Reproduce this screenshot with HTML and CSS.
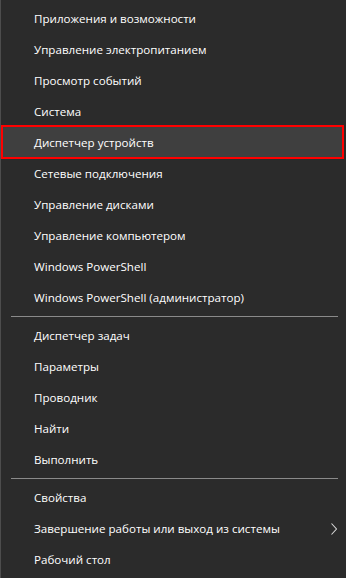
FILE: index.html
```html
<!DOCTYPE html>
<html lang="ru">
<head>
    <meta charset="UTF-8">
    <meta name="viewport" content="width=device-width, initial-scale=1.0">
    <title>Меню Win+X</title>
    <link rel="stylesheet" href="styles.css">
</head>
<body>
    <div class="menu">
        <div class="item">Приложения и возможности</div>
        <div class="item">Управление электропитанием</div>
        <div class="item">Просмотр событий</div>
        <div class="item">Система</div>
        <div class="item selected">Диспетчер устройств</div>
        <div class="item">Сетевые подключения</div>
        <div class="item">Управление дисками</div>
        <div class="item">Управление компьютером</div>
        <div class="item">Windows PowerShell</div>
        <div class="item">Windows PowerShell (администратор)</div>

        <div class="separator"></div>

        <div class="item">Диспетчер задач</div>
        <div class="item">Параметры</div>
        <div class="item">Проводник</div>
        <div class="item">Найти</div>
        <div class="item">Выполнить</div>

        <div class="separator"></div>

        <div class="item">Свойства</div>
        <div class="item submenu">
            <span>Завершение работы или выход из системы</span>
            <svg class="chevron" width="6" height="12" viewBox="0 0 6 12">
                <polyline points="0.5,0.5 5.5,6 0.5,11.5" fill="none" stroke="#d8d8d8" stroke-width="1.1"/>
            </svg>
        </div>
        <div class="item">Рабочий стол</div>
    </div>
</body>
</html>
```

FILE: styles.css
```css
html, body {
    margin: 0;
    padding: 0;
    height: 100%;
    background-color: #2b2b2b;
}
body {
    font-family: "Open Sans", "Noto Sans", sans-serif;
    font-size: 11.6px;
    color: #ffffff;
    overflow: hidden;
}
.menu {
    height: 100%;
    box-sizing: border-box;
    padding-top: 3px;
    border-left: 1px solid #4d4d4d;
}
.item {
    height: 31px;
    line-height: 31px;
    padding-left: 33px;
    display: flex;
    align-items: center;
    white-space: nowrap;
}
.selected {
    height: 30px;
    margin: -2px 2px -1px 0;
    padding-left: 31px;
    border: 2px solid #ff0000;
    background-color: #3f3f3f;
}
.submenu {
    justify-content: space-between;
    padding-right: 9px;
}
.chevron {
    display: block;
}
.separator {
    height: 1px;
    margin: 3px 8px 3px 10px;
    background-color: #8a8a8a;
}
```
